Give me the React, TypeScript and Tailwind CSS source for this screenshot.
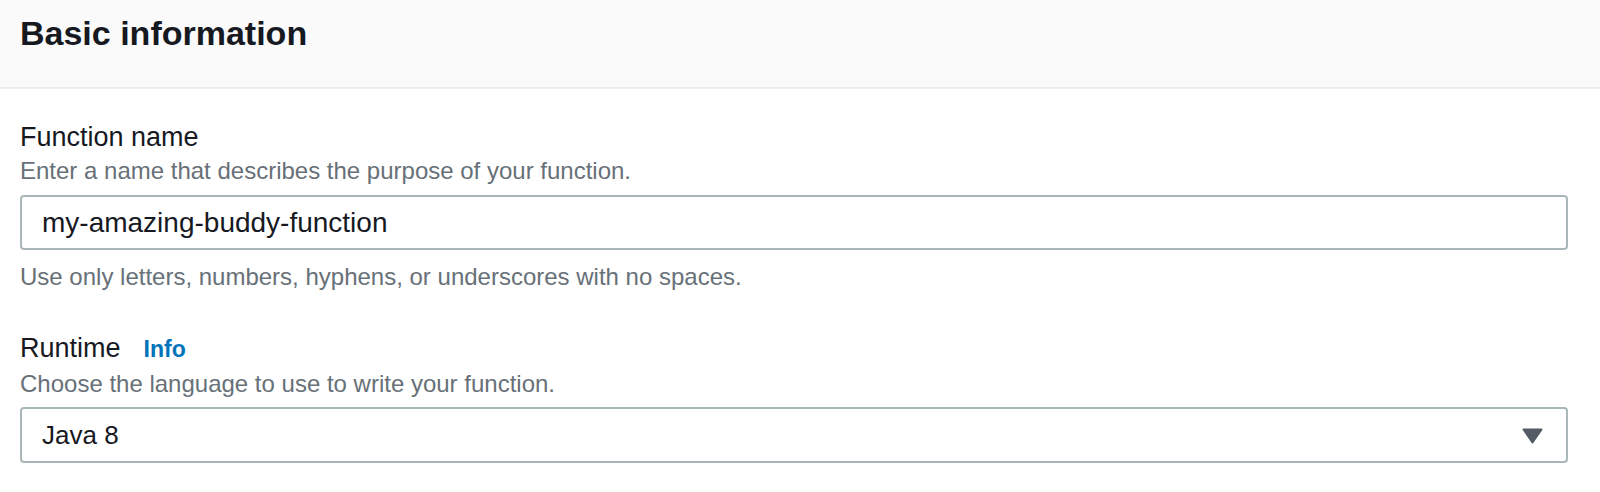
const font = { fontFamily: '"Liberation Sans", Arial, sans-serif' }

const App = () => {
  return (
    <div className="min-h-screen w-full bg-white text-[#16191f]" style={font}>
      <div className="h-[89px] border-b-2 border-[#eaeded] bg-[#fafafa] px-5 pt-[13px]">
        <h2 className="text-[34px] font-bold leading-[40px]">Basic information</h2>
      </div>

      <div className="pl-5 pr-8">
        <div className="pt-[32px]">
          <label className="block text-[27px] leading-[32px]">Function name</label>
          <p className="mt-[2px] text-[24px] leading-[32px] text-[#687078]">
            Enter a name that describes the purpose of your function.
          </p>
          <div className="mt-[8px] flex h-[55px] items-center rounded-[4px] border-2 border-[#aab7b8] px-5">
            <span className="text-[28px]">my-amazing-buddy-function</span>
          </div>
          <p className="mt-[11px] text-[24px] leading-[32px] text-[#687078]">
            Use only letters, numbers, hyphens, or underscores with no spaces.
          </p>
        </div>

        <div className="mt-[39px]">
          <div className="flex items-baseline gap-[23px] leading-[32px]">
            <label className="text-[27px]">Runtime</label>
            <a className="text-[23px] font-bold text-[#0073bb]">Info</a>
          </div>
          <p className="mt-[3px] text-[24px] leading-[32px] text-[#687078]">
            Choose the language to use to write your function.
          </p>
          <div className="mt-[7px] flex h-[56px] items-center justify-between rounded-[4px] border-2 border-[#aab7b8] pl-5 pr-[23px]">
            <span className="text-[26px]">Java 8</span>
            <svg width="21" height="16" viewBox="0 0 21 16" className="mt-[2px]">
              <path d="M1.5 1.5 L19.5 1.5 L10.5 14.5 Z" fill="#545b64" stroke="#545b64" strokeWidth="2" strokeLinejoin="round" />
            </svg>
          </div>
        </div>
      </div>
    </div>
  )
}

export default App
